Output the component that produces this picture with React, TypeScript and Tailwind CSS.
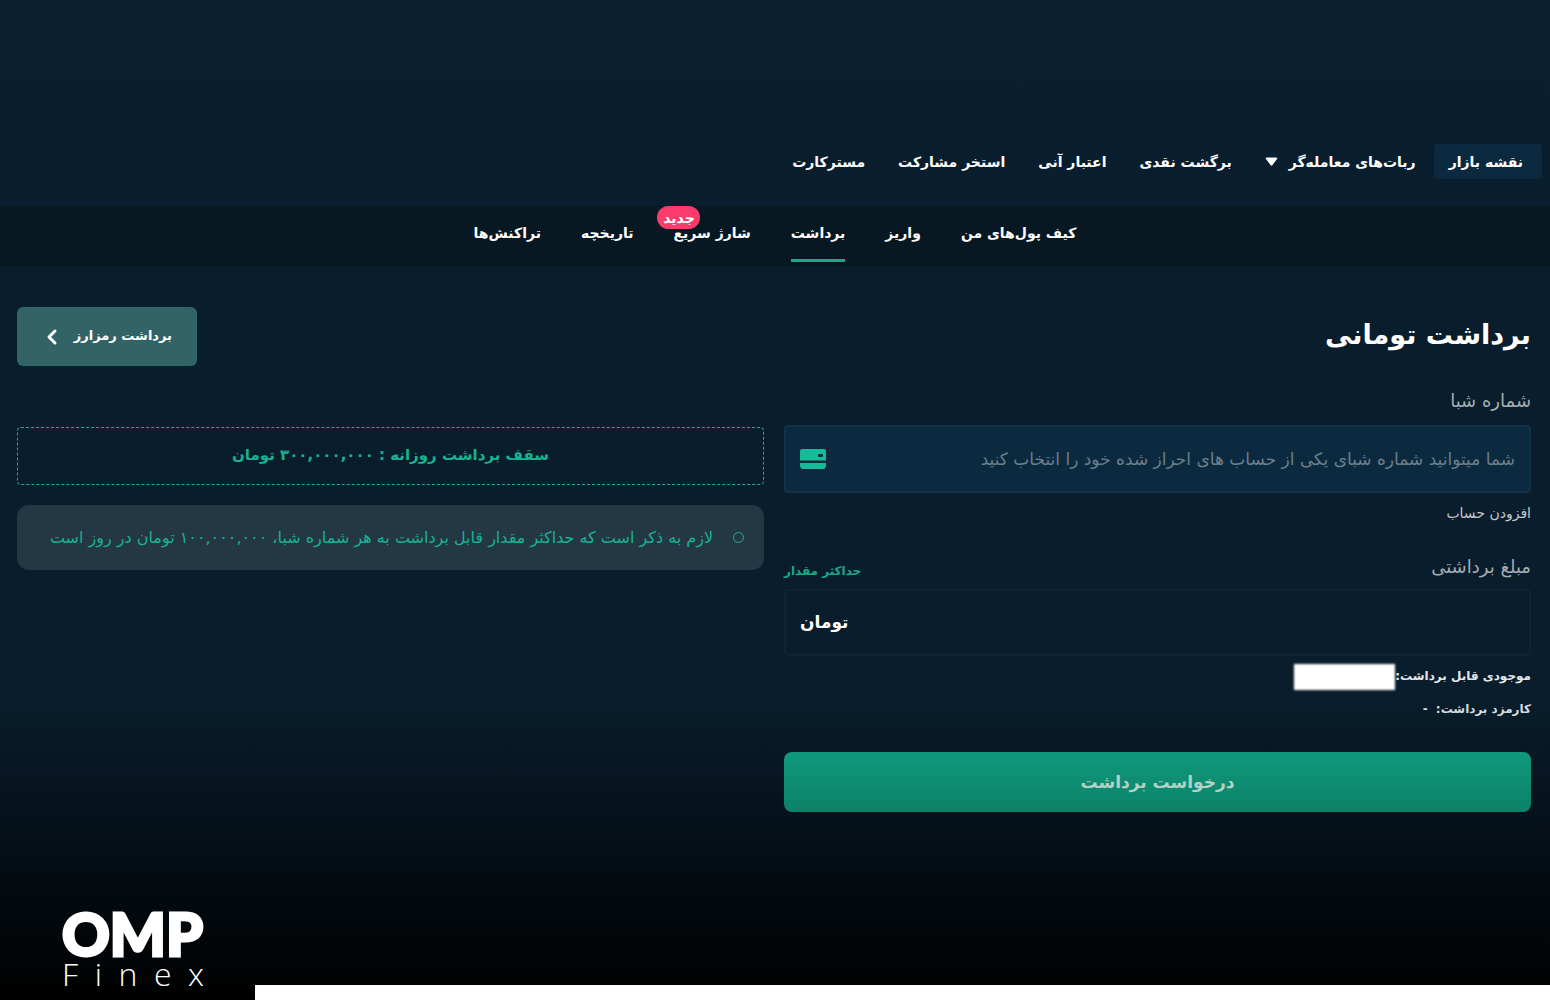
import { useState } from "react";
import { ChevronLeft } from "lucide-react";

const marketLinks = [
  { label: "نقشه بازار", active: true },
  { label: "ربات‌های معامله‌گر", hasMenu: true },
  { label: "برگشت نقدی" },
  { label: "اعتبار آنی" },
  { label: "استخر مشارکت" },
  { label: "مسترکارت" },
];

const walletLinks = [
  { label: "کیف پول‌های من" },
  { label: "واریز" },
  { label: "برداشت", active: true },
  { label: "شارژ سریع", badge: "جدید" },
  { label: "تاریخچه" },
  { label: "تراکنش‌ها" },
];

const CardIcon = () => (
  <svg width="26" height="20" viewBox="0 0 26 20" fill="#14bd97" aria-hidden="true">
    <path
      fillRule="evenodd"
      d="M2 0H24Q26 0 26 2V11.5H0V2Q0 0 2 0ZM19 5Q18 5 18 6V7Q18 8 19 8H22Q23 8 23 7V6Q23 5 22 5Z"
    />
    <path d="M0 14H26V16Q26 20 23 20H3Q0 20 0 16Z" />
  </svg>
);

const MarketNav = () => (
  <nav className="flex items-center gap-[18px] pt-36 pb-[27px] pr-2 font-bold">
    {marketLinks.map((link) => (
      <a
        key={link.label}
        href="#"
        className={
          link.active
            ? "flex h-[35px] items-center rounded bg-[#0c2a3f] pr-[19px] pl-[15px]"
            : "flex h-[35px] items-center gap-[11px] pl-[15px]"
        }
      >
        {link.label}
        {link.hasMenu && (
          <svg width="13" height="10" viewBox="0 0 13 10" fill="#fff" aria-hidden="true">
            <path d="M2 0.5H11Q13 0.5 12 2L7.5 8Q6.5 9 5.5 8L1 2Q0 0.5 2 0.5Z" />
          </svg>
        )}
      </a>
    ))}
  </nav>
);

const WalletNav = () => (
  <nav className="flex h-[60px] justify-center gap-10 bg-[#071823] font-bold">
    {walletLinks.map((link) => (
      <a
        key={link.label}
        href="#"
        className={
          link.active
            ? "relative mb-1 flex items-center border-b-[3px] border-[#1aa58c]"
            : "relative mb-1 flex items-center border-b-[3px] border-transparent"
        }
      >
        {link.label}
        {link.badge && (
          <span className="absolute top-0 -left-4 flex h-[23px] w-[43px] items-center justify-center rounded-full bg-[#fb3b6b]">
            {link.badge}
          </span>
        )}
      </a>
    ))}
  </nav>
);

const WithdrawForm = () => {
  const [sheba, setSheba] = useState("");
  const [amount, setAmount] = useState("");

  return (
    <form className="flex flex-col" onSubmit={(e) => e.preventDefault()}>
      <label htmlFor="sheba" className="text-lg leading-6 text-[#a5adb4]">
        شماره شبا
      </label>
      <div className="mt-3 flex h-[68px] items-center rounded border-2 border-[#143247] bg-[#0c2a3f] px-[14px]">
        <input
          id="sheba"
          value={sheba}
          onChange={(e) => setSheba(e.target.value)}
          placeholder="شما میتوانید شماره شبای یکی از حساب های احراز شده خود را انتخاب کنید"
          className="h-full min-w-0 flex-1 bg-transparent text-[17px] outline-none placeholder:text-[#6c7f8b]"
        />
        <CardIcon />
      </div>
      <a href="#" className="mt-2 self-start text-sm leading-6 text-[#c3c9cd]">
        افزودن حساب
      </a>

      <div className="mt-[30px] flex items-end justify-between">
        <label htmlFor="amount" className="text-lg leading-6 text-[#a5adb4]">
          مبلغ برداشتی
        </label>
        <button type="button" className="text-[12px] leading-4 font-bold text-[#17a98b]">
          حداکثر مقدار
        </button>
      </div>
      <div className="mt-[10px] flex h-[67px] items-center rounded border-2 border-[#0c2436] px-[14px]">
        <input
          id="amount"
          value={amount}
          onChange={(e) => setAmount(e.target.value)}
          className="h-full min-w-0 flex-1 bg-transparent text-[17px] outline-none"
        />
        <span className="text-[17px] font-bold">تومان</span>
      </div>

      <div className="mt-2 flex h-[26px] items-center text-[12px] font-bold text-[#e3e7ea]">
        <span>موجودی قابل برداشت:</span>
        <span className="h-[26px] w-[101px] bg-white blur-[1px]" />
      </div>
      <div className="mt-2 flex h-6 items-center gap-2 text-[12px] font-bold text-[#d5dadd]">
        <span>کارمزد برداشت:</span>
        <span>-</span>
      </div>

      <button
        type="submit"
        className="mt-[30px] h-[60px] rounded-lg bg-linear-to-b from-[#10997e] to-[#0b8266] text-[17px] font-bold text-[#b5d0c6]"
      >
        درخواست برداشت
      </button>
    </form>
  );
};

const Limits = () => (
  <div className="flex flex-col gap-5 pt-[38px] text-[#17b392]">
    <p className="flex h-[58px] items-center justify-center rounded border border-dashed border-[#1fae93] text-[15px] font-bold">
      سقف برداشت روزانه : ۳۰۰,۰۰۰,۰۰۰ تومان
    </p>
    <div className="flex h-[65px] items-center gap-5 rounded-xl bg-[#243745] pr-5">
      <span className="size-[11px] rounded-full border border-[#17b392]" />
      <p className="text-base">لازم به ذکر است که حداکثر مقدار قابل برداشت به هر شماره شبا، ۱۰۰,۰۰۰,۰۰۰ تومان در روز است</p>
    </div>
  </div>
);

const Logo = () => (
  <div dir="ltr" className="ml-[62px] w-[142px] pb-3 text-white">
    <div className="font-[Lato] text-[59px] leading-[52px] font-black [-webkit-text-stroke:3px_white]">OMP</div>
    <div className="flex justify-between font-['Open_Sans'] text-[32px] leading-[28px] font-light">
      {["F", "i", "n", "e", "x"].map((letter) => (
        <span key={letter}>{letter}</span>
      ))}
    </div>
  </div>
);

const App = () => {
  return (
    <div
      dir="rtl"
      className="flex min-h-screen flex-col bg-linear-to-b/srgb from-[#091e2e] from-0% via-[#091d2c] via-70% to-black font-['DejaVu_Sans',sans-serif] text-sm text-white"
    >
      <header>
        <MarketNav />
        <WalletNav />
      </header>

      <main className="pt-[41px] pr-[19px] pl-[17px]">
        <div className="flex items-center justify-between">
          <h1 className="pb-1 text-[27px] leading-[52px] font-bold">برداشت تومانی</h1>
          <button
            type="button"
            className="flex h-[59px] w-[180px] items-center gap-[10px] rounded-md bg-[#326467] pr-[25px] text-[13px] font-bold"
          >
            برداشت رمزارز
            <ChevronLeft size={24} strokeWidth={3} />
          </button>
        </div>
        <div className="mt-[23px] grid grid-cols-2 gap-5">
          <WithdrawForm />
          <Limits />
        </div>
      </main>

      <footer className="mt-auto flex items-end justify-end">
        <div className="h-[15px] flex-1 bg-white" />
        <div className="w-[255px]" dir="ltr">
          <Logo />
        </div>
      </footer>
    </div>
  );
};

export default App;
